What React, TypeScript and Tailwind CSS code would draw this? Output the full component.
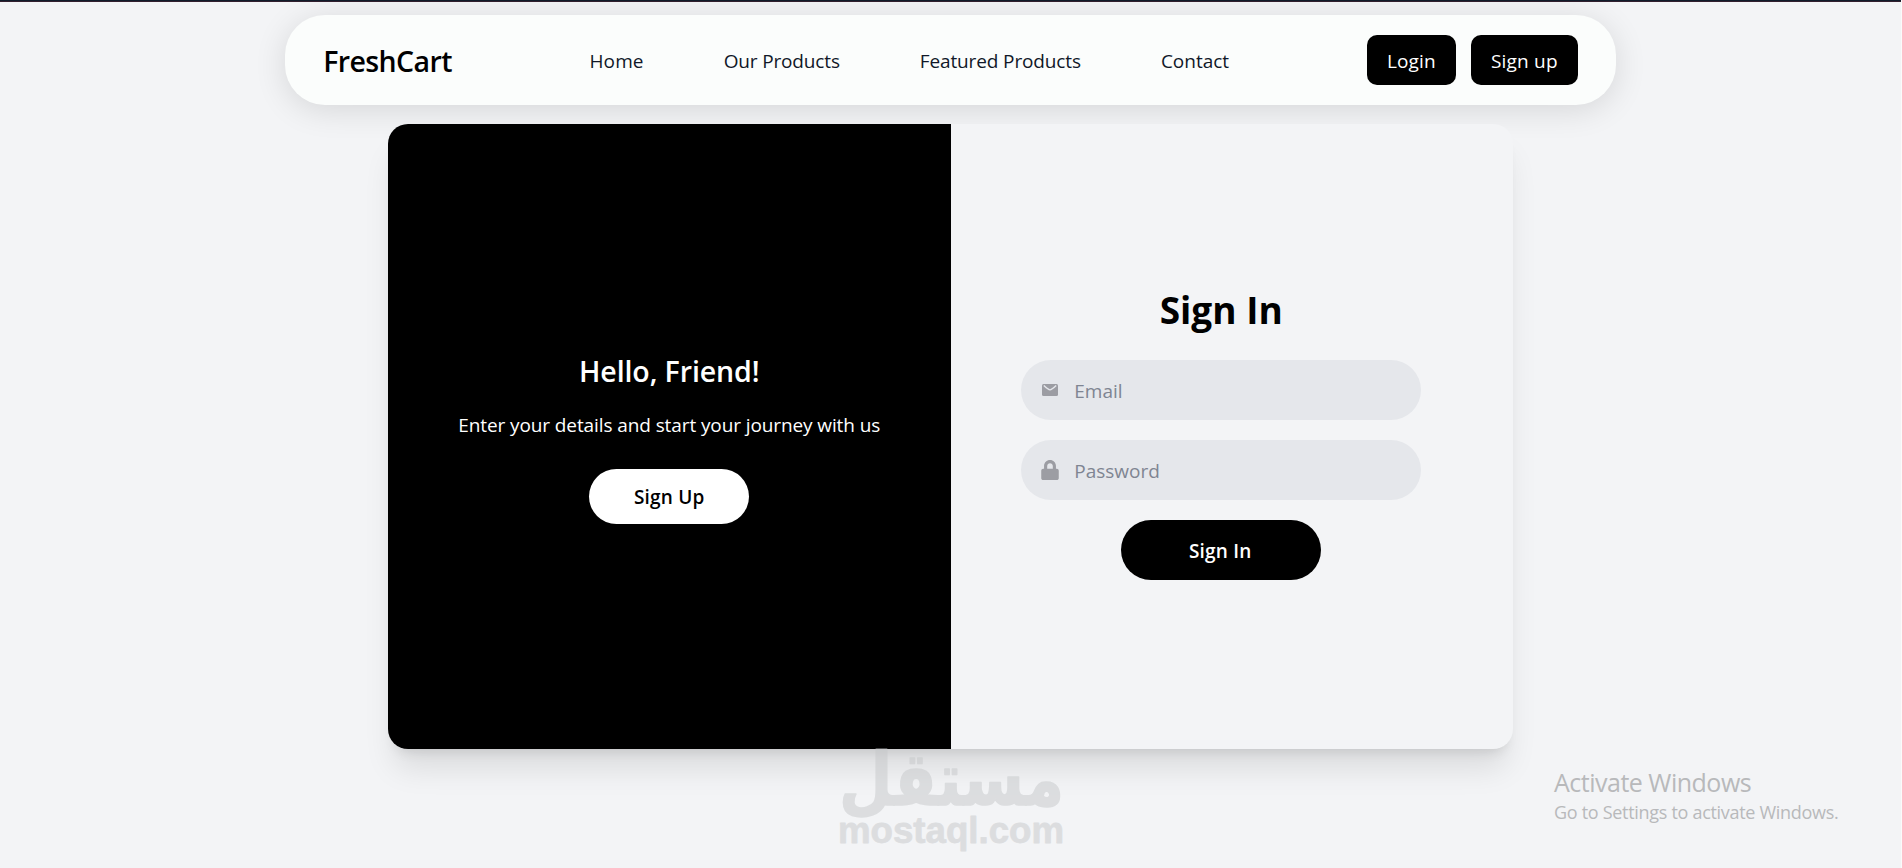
import type { ReactNode } from "react";
import { FaLock } from "react-icons/fa";

const links = [
  { name: "Home", style: "tracking-[0.1px]" },
  { name: "Our Products", style: "tracking-[-0.15px]" },
  { name: "Featured Products", style: "tracking-[-0.13px]" },
  { name: "Contact", style: "" },
];

function Navbar() {
  return (
    <nav className="w-[70%] h-[90px] mt-[13px] mx-auto px-[38px] flex items-center justify-between rounded-[40px] bg-[#fbfdfc] shadow-[0_5px_32px_rgba(0,0,0,0.12)]">
      <h1 className="pt-[2px] text-[28.5px] font-semibold tracking-[-0.6px] text-black">FreshCart</h1>
      <ul className="pt-[2px] flex gap-20 text-[19px] text-[#101828]">
        {links.map((link) => (
          <li key={link.name} className={link.style}>{link.name}</li>
        ))}
      </ul>
      <div className="flex gap-[15px] text-[19px] font-medium text-white">
        <button className="w-[89px] h-[50px] pt-[2px] rounded-[10px] bg-black tracking-[0.1px]">Login</button>
        <button className="w-[107px] h-[50px] pt-[2px] rounded-[10px] bg-black tracking-[0.2px]">Sign up</button>
      </div>
    </nav>
  );
}

function MailIcon() {
  return (
    <svg width="16" height="12" viewBox="0 0 16 12">
      <rect width="16" height="12" rx="1.5" fill="currentColor" />
      <path d="M1.8 1.6 C4.5 4.2 6.5 5.9 8 5.9 S11.5 4.2 14.2 1.6" fill="none" stroke="#e5e7eb" strokeWidth="1.4" />
    </svg>
  );
}

function Field({ icon, type, label }: { icon: ReactNode; type: string; label: string }) {
  return (
    <div className="w-[400px] h-[60px] px-[19px] flex items-center gap-[14px] rounded-[30px] bg-[#e5e7eb]">
      <span className="w-5 flex justify-center text-[20px] text-[#9c9da3]">{icon}</span>
      <input
        type={type}
        placeholder={label}
        className="flex-1 pt-[2px] bg-transparent outline-none text-[19px] font-medium placeholder:text-[#7f8592]"
      />
    </div>
  );
}

export default function App() {
  return (
    <div className="relative w-full h-[868px] overflow-hidden border-r border-[#fbfbfb] bg-[#f3f4f6] font-['Open_Sans','Noto_Sans',sans-serif]">
      {/* bottom edge of the browser bar */}
      <div className="h-[2px] bg-[#111c2b] border-b border-[#32202f]"></div>

      <Navbar />

      {/* sign in card */}
      <div className="w-[1125px] h-[625px] mt-[19px] mx-auto flex rounded-[20px] overflow-hidden bg-[#f3f4f6] shadow-[0_25px_31px_-6px_rgba(0,0,0,0.1),0_10px_12px_-7px_rgba(0,0,0,0.1)]">
        <div className="w-1/2 flex flex-col items-center justify-center bg-black text-white">
          <h2 className="pt-[2px] text-[28.5px] leading-[40px] font-semibold tracking-[-0.1px]">Hello, Friend!</h2>
          <p className="mt-[19px] text-[19px] leading-[30px] tracking-[-0.1px]">Enter your details and start your journey with us</p>
          <button className="mt-[29px] w-40 h-[55px] pt-[2px] rounded-full bg-white text-black text-[19px] font-semibold tracking-[0.2px]">
            Sign Up
          </button>
        </div>

        <div className="w-1/2 pl-[70px] pr-[91px] pb-[8px] flex flex-col items-center justify-center">
          <h2 className="mb-[25px] text-[37px] leading-[50px] font-bold text-black">Sign In</h2>
          <div className="flex flex-col items-center gap-5">
            <Field icon={<MailIcon />} type="email" label="Email" />
            <Field icon={<FaLock />} type="password" label="Password" />
            <button className="w-[200px] h-[60px] pt-[2px] pr-[2px] rounded-[30px] bg-black text-white text-[19px] font-semibold tracking-[0.2px]">
              Sign In
            </button>
          </div>
        </div>
      </div>

      {/* watermark */}
      <svg className="absolute left-[820px] top-[700px] overflow-visible" width="264" height="160" fill="#c6c8ca" stroke="#c6c8ca" strokeLinejoin="round" opacity="0.5">
        <text x="19" y="105" textLength="225" lengthAdjust="spacingAndGlyphs" direction="rtl" textAnchor="end" fontFamily="DejaVu Sans" fontWeight="700" fontSize="74" strokeWidth="1.5">مستقل</text>
        <text x="18" y="143" textLength="226" lengthAdjust="spacingAndGlyphs" fontFamily="Liberation Sans" fontWeight="700" fontSize="36" strokeWidth="0.8">mostaql.com</text>
      </svg>

      <div className="absolute left-[1554px] top-[765px] text-[#b8b9bb]">
        <p className="text-[25px] leading-[34px] tracking-[-0.5px]">Activate Windows</p>
        <p className="text-[18px] leading-[26px] tracking-[-0.3px]">Go to Settings to activate Windows.</p>
      </div>
    </div>
  );
}
